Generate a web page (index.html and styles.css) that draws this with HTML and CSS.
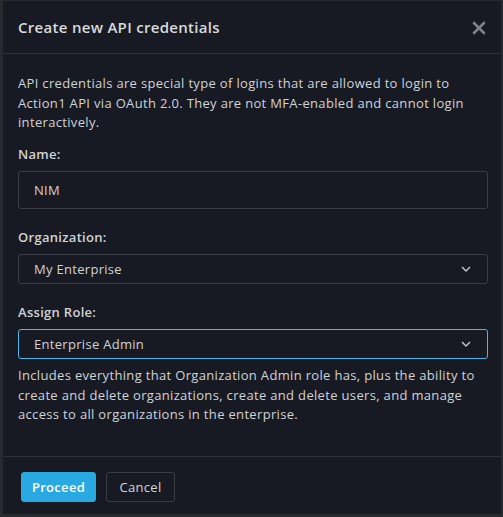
FILE: index.html
```html
<!DOCTYPE html>
<html>
<head>
<meta charset="utf-8">
<link rel="stylesheet" href="styles.css">
</head>
<body>
<div class="dialog">
  <div class="header">
    <h1 class="title">Create new API credentials</h1>
    <span class="close">
      <svg width="14" height="14" viewBox="0 0 14 14"><path d="M2 2L12 12M12 2L2 12" stroke="#7d818a" stroke-width="2.6" stroke-linecap="round"/></svg>
    </span>
  </div>
  <div class="body">
    <p class="intro">API credentials are special type of logins that are allowed to login to Action1 API via OAuth 2.0. They are not MFA-enabled and cannot login interactively.</p>
    <label class="label">Name:</label>
    <div class="input">NIM</div>
    <label class="label">Organization:</label>
    <div class="select">
      <span>My Enterprise</span>
      <svg width="10" height="6" viewBox="0 0 10 6"><path d="M1 1L5 5L9 1" fill="none" stroke="#c5c8ce" stroke-width="1.4"/></svg>
    </div>
    <label class="label">Assign Role:</label>
    <div class="select focused">
      <span>Enterprise Admin</span>
      <svg width="10" height="6" viewBox="0 0 10 6"><path d="M1 1L5 5L9 1" fill="none" stroke="#c5c8ce" stroke-width="1.4"/></svg>
    </div>
    <p class="desc">Includes everything that Organization Admin role has, plus the ability to create and delete organizations, create and delete users, and manage access to all organizations in the enterprise.</p>
  </div>
  <div class="footer">
    <button class="btn primary">Proceed</button>
    <button class="btn secondary">Cancel</button>
  </div>
</div>
</body>
</html>
```
FILE: styles.css
```css
html, body {
  margin: 0;
  padding: 0;
  background: #262930;
  height: 517px;
  overflow: hidden;
}
body {
  font-family: "Open Sans", "DejaVu Sans", sans-serif;
  color: #d0d3d8;
  padding: 1px 2px 3px 3px;
  box-sizing: border-box;
}
.dialog {
  background: #171a22;
  height: 513px;
  display: flex;
  flex-direction: column;
}
.header {
  height: 52px;
  border-bottom: 1px solid #2e3139;
  display: flex;
  align-items: center;
  justify-content: space-between;
  padding: 0 15px 0 15px;
}
.title {
  margin: 0;
  font-size: 15px;
  font-weight: 600;
  color: #d8dadf;
  letter-spacing: 0.3px;
}
.close {
  display: flex;
  margin-top: 1px;
}
.body {
  padding: 20px 13px 0 15px;
  flex: 1;
  display: flex;
  flex-direction: column;
}
.intro, .desc {
  margin: 0;
  font-size: 13px;
  line-height: 19.5px;
  letter-spacing: 0.33px;
}
.intro {
  margin-bottom: 12.5px;
}
.desc {
  margin-top: 7px;
}
.label {
  display: block;
  font-size: 13px;
  font-weight: 600;
  margin: 0 0 8px 0;
  line-height: 18px;
  letter-spacing: 0.3px;
}
.input {
  height: 38px;
  border: 1px solid #3a3d45;
  border-radius: 3px;
  box-sizing: border-box;
  padding: 0 15px;
  display: flex;
  align-items: center;
  font-size: 13px;
  letter-spacing: 0.3px;
  margin-bottom: 19px;
}
.select {
  height: 30px;
  border: 1px solid #3a3d45;
  border-radius: 3px;
  box-sizing: border-box;
  padding: 0 16px 0 15px;
  display: flex;
  align-items: center;
  justify-content: space-between;
  font-size: 13px;
  letter-spacing: 0.3px;
  margin-bottom: 19px;
}
.select.focused {
  border-color: #4cb6e6;
  margin-bottom: 0;
}
.footer {
  border-top: 1px solid #2e3139;
  display: flex;
  align-items: flex-start;
  padding: 15px 0 0 18px;
  gap: 10px;
  box-sizing: border-box;
  height: 58px;
}
.btn {
  height: 30px;
  border-radius: 3px;
  font-family: inherit;
  font-size: 13px;
  padding: 0 8px;
  cursor: pointer;
  letter-spacing: 0.3px;
}
.primary {
  background: #29a9e1;
  border: 1px solid #29a9e1;
  color: #ffffff;
  font-weight: 600;
  width: 75px;
}
.secondary {
  background: transparent;
  border: 1px solid #3a3d45;
  color: #d3d6db;
  width: 69px;
}
```
